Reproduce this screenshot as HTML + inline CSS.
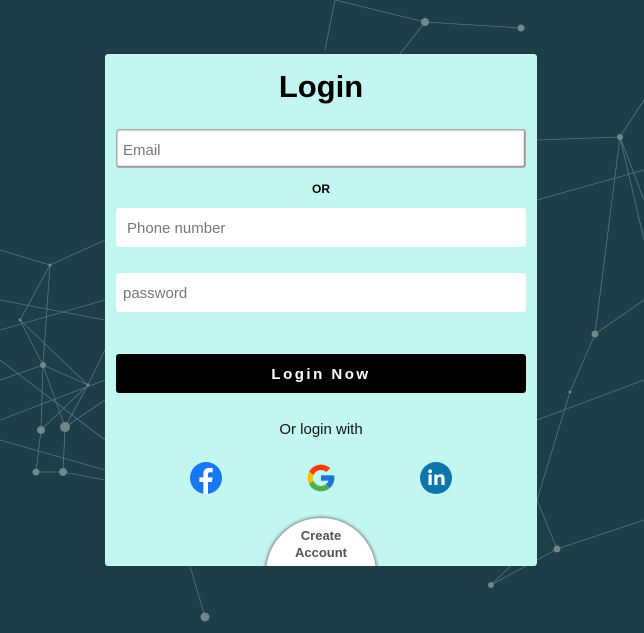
<!DOCTYPE html>
<html><head><style>
html,body{margin:0;padding:0;width:644px;height:633px;overflow:hidden;background:#1d3e47;font-family:"Liberation Sans","DejaVu Sans",sans-serif;}
svg.bg{position:absolute;left:0;top:0}
.card{position:absolute;left:105px;top:54px;width:432px;height:512px;background:#c2f6f0;border-radius:3px;overflow:hidden}
h1{margin:0;position:absolute;top:15px;left:0;width:100%;text-align:center;font-size:31px;font-weight:bold;color:#000}
.in{position:absolute;left:11px;width:410px;height:39px;background:#fff;border-radius:3px;box-sizing:border-box;font-size:15px;color:#777;line-height:41px}
.or{position:absolute;top:128px;width:100%;text-align:center;font-size:12px;font-weight:bold}
.btn{position:absolute;left:11px;top:300px;width:410px;height:39px;background:#000;border-radius:3px;color:#fff;font-weight:bold;font-size:15px;letter-spacing:2.5px;text-align:center;line-height:42px}
.olw{position:absolute;top:367px;width:100%;text-align:center;font-size:15px;color:#111}
.ca{position:absolute;left:161px;top:464px;width:110px;height:110px;border-radius:50%;background:#fff;box-shadow:0 0 3px 1px #777;text-align:center;font-size:13px;font-weight:bold;color:#555;line-height:17px;padding-top:9px;box-sizing:border-box}
</style></head><body>
<svg class="bg" width="644" height="633" stroke="#7a9aa0" stroke-width="0.8" opacity="0.6">
<g fill="none">
<path d="M335 0 L325 50 M335 0 L425 22 L521 28 M425 22 L400 54 M0 250 L50 265 L20 320 L43 365 L65 427 L63 472 L36 472 L41 430 L43 365 M50 265 L43 365 L88 385 L65 427 M20 320 L88 385 L41 430 L36 472 M0 380 L43 365 M0 330 L105 300 M50 265 L105 240 M88 385 L105 350 M65 427 L105 400 M63 472 L105 480 M0 440 L105 470 M0 300 L105 320 M0 420 L105 380 M0 360 L105 440 M537 140 L620 137 L644 100 M620 137 L644 240 M595 334 L620 137 M595 334 L570 392 L537 500 M595 334 L644 300 M557 549 L644 520 M557 549 L537 500 M557 549 L491 585 M537 540 L491 585 M205 617 L190 566 M620 137 L644 200 M537 200 L644 170 M537 420 L644 380"/>
</g>
<g fill="#a8b8bb" stroke="none">
<circle cx="425" cy="22" r="4"/><circle cx="521" cy="28" r="3.5"/><circle cx="50" cy="265" r="1.5"/><circle cx="20" cy="320" r="1.5"/><circle cx="43" cy="365" r="3"/><circle cx="88" cy="385" r="1.5"/><circle cx="41" cy="430" r="4"/><circle cx="65" cy="427" r="5"/><circle cx="36" cy="472" r="3.5"/><circle cx="63" cy="472" r="4"/><circle cx="620" cy="137" r="3"/><circle cx="595" cy="334" r="3.5"/><circle cx="570" cy="392" r="1.5"/><circle cx="557" cy="549" r="3.5"/><circle cx="491" cy="585" r="3"/><circle cx="205" cy="617" r="4.5"/>
</g>
</svg>
<div class="card">
<h1>Login</h1>
<div class="in" style="top:75px;border:1px solid #aaa;box-shadow:inset -1px -1px 1px #888, inset 1px 1px 1px #ccc;padding-left:6px">Email</div>
<div class="or">OR</div>
<div class="in" style="top:154px;padding-left:11px">Phone number</div>
<div class="in" style="top:219px;padding-left:7px">password</div>
<div class="btn">Login Now</div>
<div class="olw">Or login with</div>
<svg style="position:absolute;left:85px;top:408px" width="32" height="32" viewBox="0 0 32 32"><circle cx="16" cy="16" r="16" fill="#1877f2"/><path d="M18 32V20h4l.6-4.6H18v-3c0-1.3.4-2.2 2.3-2.2h2.4V6.1c-.4-.1-1.8-.2-3.5-.2-3.5 0-5.8 2.1-5.8 6v3.5h-4V20h4v12z" fill="#fff"/></svg>
<svg style="position:absolute;left:200px;top:408px" width="32" height="32" viewBox="0 0 48 48"><path d="M43.6 20.1H42V20H24v8h11.3C33.7 32.7 29.2 36 24 36c-6.6 0-12-5.4-12-12s5.4-12 12-12c3.1 0 5.8 1.2 8 3l5.7-5.7C34 6.1 29.3 4 24 4 13 4 4 13 4 24s9 20 20 20 20-9 20-20c0-1.300-.1-2.600-.4-3.900z" fill="#FFC107"/><path d="M6.3 14.7l6.6 4.8C14.7 15.1 19 12 24 12c3.1 0 5.8 1.2 8 3l5.7-5.7C34 6.1 29.3 4 24 4 16.3 4 9.7 8.3 6.3 14.7z" fill="#FF3D00"/><path d="M24 44c5.2 0 9.9-2 13.4-5.2l-6.2-5.2C29.2 35.1 26.7 36 24 36c-5.2 0-9.6-3.3-11.3-7.9l-6.5 5C9.5 39.6 16.2 44 24 44z" fill="#4CAF50"/><path d="M43.6 20.1H42V20H24v8h11.3c-.8 2.2-2.2 4.2-4.1 5.6l6.2 5.2C37 39.2 44 34 44 24c0-1.3-.1-2.6-.4-3.9z" fill="#1976D2"/></svg>
<svg style="position:absolute;left:315px;top:408px" width="32" height="32" viewBox="0 0 32 32"><circle cx="16" cy="16" r="16" fill="#0e76a8"/><rect x="8.5" y="12.5" width="3.2" height="10.5" fill="#fff"/><circle cx="10.1" cy="9.3" r="1.9" fill="#fff"/><path d="M14.3 12.5h3v1.5c.5-.9 1.7-1.8 3.4-1.8 3.3 0 3.9 2.1 3.9 4.9V23h-3.2v-5.2c0-1.3 0-2.9-1.8-2.9s-2.1 1.4-2.1 2.8V23h-3.2z" fill="#fff"/></svg>
<div class="ca">Create<br>Account</div>
</div>
</body></html>
